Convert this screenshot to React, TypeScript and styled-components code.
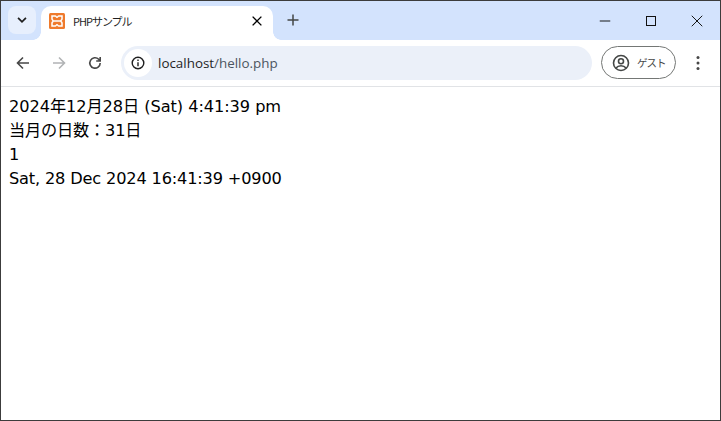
import React from 'react';
import styled, { createGlobalStyle } from 'styled-components';

const GlobalStyle = createGlobalStyle`
  html, body {
    margin: 0;
    padding: 0;
    background: #fff;
  }
  * {
    box-sizing: border-box;
  }
`;

const Window = styled.div`
  display: flex;
  flex-direction: column;
  width: 721px;
  height: 421px;
  border: 1px solid #3c3c3c;
  background: #fff;
  overflow: hidden;
`;

const TabStrip = styled.div`
  display: flex;
  align-items: flex-end;
  height: 39px;
  padding-left: 7px;
  background: #d3e3fd;
`;

const TabSearch = styled.div`
  display: flex;
  align-items: center;
  justify-content: center;
  align-self: flex-start;
  width: 28px;
  height: 28px;
  margin-top: 5px;
  border-radius: 8px;
  background: #e7effd;
  color: #1f1f1f;
`;

const Tab = styled.div`
  position: relative;
  display: flex;
  align-items: center;
  width: 232px;
  height: 34px;
  margin-left: 5px;
  padding: 0 9px 4px 8px;
  border-radius: 10px 10px 0 0;
  background: #fff;

  &::before,
  &::after {
    content: '';
    position: absolute;
    bottom: 0;
    width: 8px;
    height: 8px;
  }
  &::before {
    left: -8px;
    background: radial-gradient(circle at 0 0, #d3e3fd 7.5px, #fff 8px);
  }
  &::after {
    right: -8px;
    background: radial-gradient(circle at 100% 0, #d3e3fd 7.5px, #fff 8px);
  }
`;

const TabTitle = styled.span`
  flex: 1;
  margin-left: 8px;
  font: 11px 'Noto Sans CJK JP', 'Liberation Sans', sans-serif;
  color: #1f1f1f;
  letter-spacing: -1px;
`;

const IconSlot = styled.span`
  display: flex;
  align-items: center;
  justify-content: center;
`;

const NewTab = styled.div`
  display: flex;
  align-self: flex-start;
  align-items: center;
  justify-content: center;
  width: 28px;
  height: 28px;
  margin: 5px 0 0 6px;
  color: #444746;
`;

const Caption = styled.div`
  display: flex;
  align-self: flex-start;
  margin-left: auto;
`;

const CaptionButton = styled.div`
  display: flex;
  align-items: center;
  justify-content: center;
  width: 46px;
  height: 39px;
  color: #111;
`;

const Toolbar = styled.div`
  display: flex;
  align-items: center;
  height: 47px;
  padding: 0 4px 1px 4px;
  border-bottom: 1px solid #e1e3e6;
  border-radius: 9px 9px 0 0;
  background: #fff;
`;

const NavButton = styled.div<{ $dim?: boolean }>`
  display: flex;
  align-items: center;
  justify-content: center;
  width: 36px;
  height: 36px;
  color: ${(p) => (p.$dim ? '#b1b3b5' : '#474747')};
`;

const Omnibox = styled.div`
  display: flex;
  align-items: center;
  width: 471px;
  height: 34px;
  margin-left: 8px;
  padding-left: 3px;
  border-radius: 17px;
  background: #ebf0f9;
`;

const InfoChip = styled.div`
  display: flex;
  align-items: center;
  justify-content: center;
  width: 28px;
  height: 28px;
  border-radius: 50%;
  background: #fff;
  color: #1f1f1f;
`;

const Url = styled.span`
  margin-left: 6px;
  font: 13.4px 'Open Sans', 'Liberation Sans', sans-serif;
  color: #1f1f1f;
`;

const UrlRest = styled.span`
  color: #4c5560;
`;

const ProfileChip = styled.div`
  display: flex;
  align-items: center;
  width: 75px;
  height: 33px;
  margin-left: 9px;
  padding-left: 10px;
  border: 1px solid #747775;
  border-radius: 17px;
  color: #444746;
`;

const ProfileName = styled.span`
  margin-left: 7px;
  font: 10.5px 'Noto Sans CJK JP', sans-serif;
  letter-spacing: -1px;
  color: #474747;
`;

const MenuButton = styled.div`
  display: flex;
  align-items: center;
  justify-content: center;
  width: 36px;
  height: 36px;
  margin-left: 4px;
  color: #474747;
`;

const Page = styled.main`
  flex: 1;
  padding: 8px;
  font: 16px/24px 'DejaVu Sans', 'Noto Sans CJK JP', sans-serif;
  color: #000;
`;

const Line = styled.div<{ $spacing?: number }>`
  height: 24px;
  white-space: nowrap;
  font-size: 16.2px;
  letter-spacing: ${(p) => p.$spacing ?? -0.17}px;
`;

const XamppIcon = () => (
  <svg width="16" height="16" viewBox="0 0 16 16">
    <rect width="16" height="16" rx="1.5" fill="#ef7a2c" />
    <path
      d="M3 3h3.200c.9 0 1 1.300 1.800 1.300S8.900 3 9.800 3H13v3c0 1-1.300 1.200-1.300 2s1.300 1 1.300 2v3H9.800c-.9 0-1-1.300-1.800-1.300S7.100 13 6.200 13H3v-3c0-1 1.300-1.200 1.300-2S3 7 3 6z"
      fill="none"
      stroke="#fff"
      strokeWidth="1.500"
    />
    <path d="M5 8h6" stroke="#fff" strokeWidth="1.500" />
  </svg>
);

const Stroke = ({ size = 16, width = 1.5, d }: { size?: number; width?: number; d: string }) => (
  <svg width={size} height={size} viewBox="0 0 16 16" fill="none" stroke="currentColor" strokeWidth={width}>
    <path d={d} />
  </svg>
);

const App = () => (
  <>
    <GlobalStyle />
    <Window>
      <TabStrip>
        <TabSearch>
          <Stroke size={14} width={2} d="M3.500 5.500 8 10l4.500-4.500" />
        </TabSearch>
        <Tab>
          <XamppIcon />
          <TabTitle>PHPサンプル</TabTitle>
          <IconSlot>
            <Stroke size={14} width={1.600} d="M3 3l10 10M13 3 3 13" />
          </IconSlot>
        </Tab>
        <NewTab>
          <Stroke size={16} width={1.500} d="M8 2.500v11M2.500 8h11" />
        </NewTab>
        <Caption>
          <CaptionButton>
            <Stroke size={12} width={1.300} d="M1 8h14" />
          </CaptionButton>
          <CaptionButton>
            <svg width="10" height="10" viewBox="0 0 10 10" fill="none" stroke="currentColor">
              <rect x="0.500" y="0.500" width="9" height="9" />
            </svg>
          </CaptionButton>
          <CaptionButton>
            <Stroke size={12} width={1.300} d="M1 1l14 14M15 1 1 15" />
          </CaptionButton>
        </Caption>
      </TabStrip>
      <Toolbar>
        <NavButton>
          <Stroke size={16} width={1.600} d="M14 8H2.500M8 2.500 2.500 8 8 13.500" />
        </NavButton>
        <NavButton $dim>
          <Stroke size={16} width={1.600} d="M2 8h11.500M8 2.500 13.500 8 8 13.500" />
        </NavButton>
        <NavButton>
          <Stroke size={16} width={1.600} d="M13.200 8a5.200 5.200 0 1 1-1.500-3.700L13.200 6M13.200 2v4h-4" />
        </NavButton>
        <Omnibox>
          <InfoChip>
            <svg width="14" height="14" viewBox="0 0 14 14" fill="none" stroke="currentColor" strokeWidth="1.400">
              <circle cx="7" cy="7" r="5.800" />
              <path d="M7 6.200v4M7 3.500v1.500" />
            </svg>
          </InfoChip>
          <Url>
            localhost<UrlRest>/hello.php</UrlRest>
          </Url>
        </Omnibox>
        <ProfileChip>
          <svg width="18" height="18" viewBox="0 0 18 18" fill="none" stroke="currentColor" strokeWidth="1.600">
            <circle cx="9" cy="9" r="7.500" />
            <circle cx="9" cy="7.300" r="2.500" />
            <path d="M4 14c1.500-2 3-2.300 5-2.300s3.500.3 5 2.300" />
          </svg>
          <ProfileName>ゲスト</ProfileName>
        </ProfileChip>
        <MenuButton>
          <svg width="4" height="16" viewBox="0 0 4 16" fill="currentColor">
            <circle cx="2" cy="2.500" r="1.500" />
            <circle cx="2" cy="8" r="1.500" />
            <circle cx="2" cy="13.500" r="1.500" />
          </svg>
        </MenuButton>
      </Toolbar>
      <Page>
        <Line $spacing={-0.07}>2024年12月28日 (Sat) 4:41:39 pm</Line>
        <Line>当月の日数：31日</Line>
        <Line>1</Line>
        <Line>Sat, 28 Dec 2024 16:41:39 +0900</Line>
      </Page>
    </Window>
  </>
);

export default App;
